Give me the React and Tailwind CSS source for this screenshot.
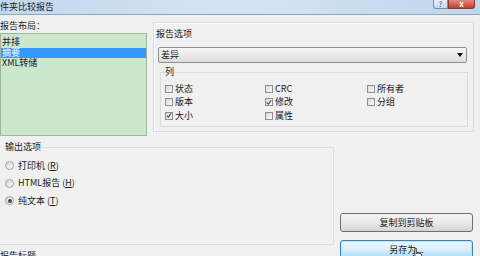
import React from 'react';

const Check = ({ checked, label }) => (
  <div className="flex items-center h-[13.5px] gap-[2px]">
    <span className="w-[8px] h-[8px] border border-[#8f8f8f] bg-linear-to-br from-[#d8d8d8] to-[#fafafa] flex items-center justify-center">
      {checked ? (
        <svg width="7" height="7" viewBox="0 0 7 7">
          <path d="M1 3.6 L2.8 5.4 L6 1" fill="none" stroke="#2b4a7a" strokeWidth="1.2" />
        </svg>
      ) : null}
    </span>
    <span>{label}</span>
  </div>
);

const Radio = ({ checked, children }) => (
  <div className="flex items-center h-[17.5px] gap-[4px]">
    <span className="w-[9px] h-[9px] rounded-full border border-[#a0a0a0] bg-linear-to-br from-[#d6d6d6] to-[#fbfbfb] flex items-center justify-center">
      {checked ? <span className="w-[4px] h-[4px] rounded-full bg-[#3a4f6a]" /> : null}
    </span>
    <span>{children}</span>
  </div>
);

export default function App() {
  return (
    <div className="w-[480px] h-[256px] overflow-hidden bg-[#f0f0f0] text-[9px] leading-[12px] text-[#1a1a1a] font-['Noto_Sans_CJK_SC',sans-serif]">
      {/* title bar */}
      <div className="h-[15px] flex items-start justify-between border-b border-[#8ea6c0] bg-linear-to-r from-[#c3d7ec] via-[#d4e4f3] to-[#c0d6ec]">
        <span className="leading-[14px] text-[#222]">件夹比较报告</span>
        <div className="flex items-start mr-[5px]">
          <span className="w-[15px] h-[9px] flex items-center justify-center border border-[#7b8ea6] border-t-0 rounded-bl-[3px] bg-linear-to-b from-[#e4edf7] to-[#c9d8ea] text-[7px] leading-none text-[#33475e]">?</span>
          <span className="w-[27px] h-[9px] flex items-center justify-center border border-[#8a3a30] border-t-0 rounded-br-[3px] bg-linear-to-b from-[#e08a7c] to-[#c43b2a] text-[8px] leading-none text-white font-bold">x</span>
        </div>
      </div>

      {/* top row */}
      <div className="flex">
        <div className="w-[147px] flex flex-col">
          <div className="pt-[5px] h-[18px]">报告布局：</div>
          <div className="h-[103px] border border-[#9fb59f] bg-[#cce8cc] pt-[3px]">
            <div className="h-[10.5px] leading-[10.5px] pl-[1px]">并排</div>
            <div className="h-[10.5px] leading-[10.5px] pl-[1px] bg-[#3399ff] text-white">摘要</div>
            <div className="h-[10.5px] leading-[10.5px] pl-[1px]">XML转储</div>
          </div>
        </div>

        <div className="ml-[6px] mt-[7px] w-[321px] h-[110px] border border-[#dadada] shadow-[inset_1px_1px_0_#ffffff] pl-[4px] pr-[6px]">
          <div className="pt-[5px] h-[17px] ml-[-2px]">报告选项</div>
          <div className="mt-[7px] h-[16px] border border-[#8e8f8f] rounded-[2px] bg-linear-to-b from-[#f7f7f7] to-[#dedede] flex items-center justify-between pl-[2px] pr-[3px]">
            <span>差异</span>
            <svg width="6" height="4" viewBox="0 0 6 4">
              <path d="M0 0 L6 0 L3 4 Z" fill="#111" />
            </svg>
          </div>
          <fieldset className="mt-[3px] ml-[2px] w-[308px] border border-[#dcdcdc] pl-[4px] pb-[3px]">
            <legend className="px-0 leading-[12px]">列</legend>
            <div className="grid grid-cols-[100px_102px_1fr] mt-[4px]">
              <Check label="状态" />
              <Check label="CRC" />
              <Check label="所有者" />
              <Check label="版本" />
              <Check checked label="修改" />
              <Check label="分组" />
              <Check checked label="大小" />
              <Check label="属性" />
            </div>
          </fieldset>
        </div>
      </div>

      {/* bottom row */}
      <div className="flex mt-[5px]">
        <div className="w-[338px] ml-[-4px] flex flex-col">
          <fieldset className="h-[104px] border border-[#dcdcdc] pl-[8px]">
            <legend className="ml-[-4px] pl-[4px] leading-[12px]">输出选项</legend>
            <div className="mt-[4px]">
              <Radio>
                打印机 (<span className="underline">R</span>)
              </Radio>
              <Radio>
                HTML报告 (<span className="underline">H</span>)
              </Radio>
              <Radio checked>
                纯文本 (<span className="underline">T</span>)
              </Radio>
            </div>
          </fieldset>
          <div className="pl-[4px] mt-[5px]">报告标题</div>
        </div>

        <div className="ml-[6px] w-[133px] flex flex-col pt-[72px] gap-[8px]">
          <div className="h-[19px] border border-[#707070] rounded-[3px] bg-linear-to-b from-[#f2f2f2] via-[#ebebeb] to-[#d4d4d4] flex items-center justify-center">
            复制到剪贴板
          </div>
          <div className="relative h-[19px] border border-[#3c7fb1] rounded-[3px] bg-linear-to-b from-[#eaf6fd] via-[#d9f0fc] to-[#a7d9f5] shadow-[inset_0_0_0_1px_#bfe4f8] flex items-center justify-center">
            另存为...
            <svg className="absolute left-[71px] top-[7px]" width="10" height="12" viewBox="0 0 10 12">
              <path d="M3 0.5 h1.5 v5 h1 v-1 h1 v1 h1 v-0.5 h1 v1 h1 v4 l-1 2 h-5 l-2.5 -3.5 v-1 h1 l1 1 z" fill="#fff" stroke="#000" strokeWidth="0.6" />
            </svg>
          </div>
        </div>
      </div>
    </div>
  );
}
